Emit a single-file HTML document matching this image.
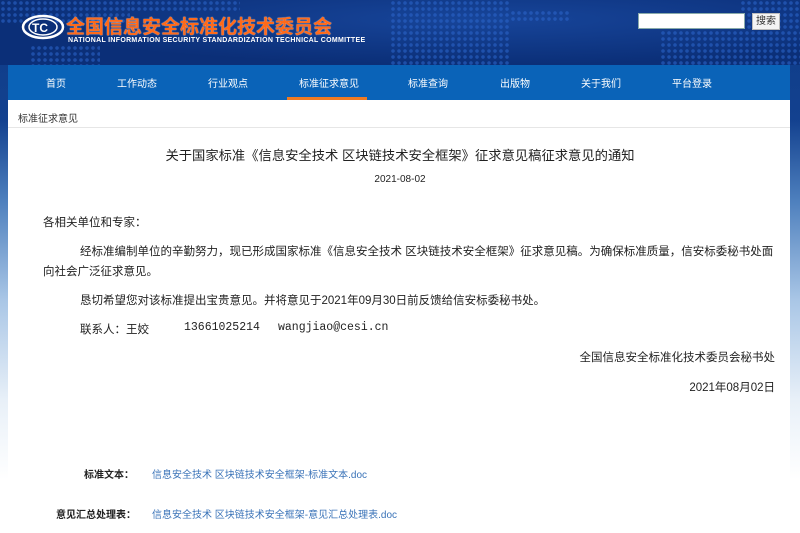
<!DOCTYPE html>
<html><head><meta charset="utf-8"><style>
*{margin:0;padding:0;box-sizing:border-box}
body{width:800px;height:533px;overflow:hidden;font-family:"Liberation Sans","Noto Sans CJK SC",sans-serif;background:linear-gradient(180deg,#0d3b86 0,#13418f 120px,#4d7fbd 200px,#a9c6e6 300px,#e8f0f8 400px,#fff 480px);position:relative}
.hdr{position:absolute;left:0;top:0;width:800px;height:65px;background:radial-gradient(ellipse at 60% 30%,#17459a 0,#0b2f78 70%);overflow:hidden}
.dots{position:absolute;background-image:radial-gradient(circle,#2a63c8 1.6px,transparent 2px);background-size:6px 6px;opacity:.6}
.logo{position:absolute;left:20px;top:12px}
.cn{position:absolute;left:66px;top:12px;font-size:19px;font-weight:bold;color:#ff6a1a;text-shadow:0 0 1px #fff}
.en{position:absolute;left:68px;top:37px;font-size:7px;color:#fff;font-weight:bold;letter-spacing:.3px;white-space:nowrap}
.search{position:absolute;left:638px;top:13px;width:107px;height:16px;background:#fff;border:1px solid #8aa}
.sbtn{position:absolute;left:752px;top:13px;width:28px;height:17px;background:#f4f4f4;border:1px solid #bbb;font-size:10px;color:#333;text-align:center;line-height:15px}
.nav{position:absolute;left:8px;top:65px;width:782px;height:35px;background:#0a63b8}
.nav span{position:absolute;top:10px;font-size:10px;color:#fff}
.act{position:absolute;left:287px;top:97px;width:80px;height:3px;background:#f07a22}
.main{position:absolute;left:8px;top:100px;width:782px;height:433px;background:#fff}
.bc{height:28px;border-bottom:1px solid #e6e6e6;font-size:10px;color:#333;padding:10px 0 0 10px}
.t{position:absolute;font-size:12px;color:#222;white-space:nowrap}
.p{font-size:11.5px}
.a{color:#3a73b8;font-size:10px}
.l{font-size:10px;font-weight:bold;color:#222}
</style></head><body>
<div class="hdr">
<div class="dots" style="left:0;top:0;width:130px;height:25px"></div>
<div class="dots" style="left:30px;top:45px;width:70px;height:20px"></div>
<div class="dots" style="left:130px;top:0;width:110px;height:12px"></div>
<div class="dots" style="left:390px;top:0;width:120px;height:65px"></div>
<div class="dots" style="left:510px;top:10px;width:60px;height:12px"></div>
<div class="dots" style="left:660px;top:30px;width:140px;height:35px"></div>
<div class="dots" style="left:740px;top:0;width:60px;height:30px"></div>
<svg class="logo" width="46" height="30" viewBox="0 0 46 30"><ellipse cx="23" cy="15" rx="20" ry="11" fill="none" stroke="#fff" stroke-width="2.5"/><ellipse cx="23" cy="15" rx="14" ry="8" fill="#0b2f78" stroke="#fff" stroke-width="1.5"/><text x="12" y="20" font-size="12" font-weight="bold" fill="#fff" font-family="Liberation Sans">TC</text></svg>
<div class="cn">全国信息安全标准化技术委员会</div>
<div class="en">NATIONAL INFORMATION SECURITY STANDARDIZATION TECHNICAL COMMITTEE</div>
<div class="search"></div><div class="sbtn">搜索</div>
</div>
<div class="nav">
<span style="left:38px">首页</span><span style="left:109px">工作动态</span><span style="left:200px">行业观点</span><span style="left:291px">标准征求意见</span><span style="left:400px">标准查询</span><span style="left:492px">出版物</span><span style="left:573px">关于我们</span><span style="left:664px">平台登录</span>
</div>
<div class="act"></div>
<div class="main"><div class="bc">标准征求意见</div></div>
<div class="t" style="left:0;width:800px;text-align:center;top:145px;font-size:13.3px">关于国家标准《信息安全技术 区块链技术安全框架》征求意见稿征求意见的通知</div>
<div class="t" style="left:0;width:800px;text-align:center;top:174px;font-size:10px">2021-08-02</div>
<div class="t p" style="left:43px;top:214px">各相关单位和专家：</div>
<div class="t p" style="left:80px;top:243px">经标准编制单位的辛勤努力，现已形成国家标准《信息安全技术 区块链技术安全框架》征求意见稿。为确保标准质量，信安标委秘书处面</div>
<div class="t p" style="left:43px;top:263px">向社会广泛征求意见。</div>
<div class="t p" style="left:80px;top:292px">恳切希望您对该标准提出宝贵意见。并将意见于2021年09月30日前反馈给信安标委秘书处。</div>
<div class="t p" style="left:80px;top:321px">联系人：王姣</div>
<div class="t" style="left:184px;top:321px;font-family:'Liberation Mono',monospace;font-size:11.5px">13661025214</div>
<div class="t" style="left:278px;top:321px;font-family:'Liberation Mono',monospace;font-size:11.5px">wangjiao@cesi.cn</div>
<div class="t p" style="right:25px;top:349px">全国信息安全标准化技术委员会秘书处</div>
<div class="t p" style="right:25px;top:379px">2021年08月02日</div>
<div class="t l" style="left:84px;top:466px">标准文本：</div>
<div class="t a" style="left:152px;top:466px">信息安全技术 区块链技术安全框架-标准文本.doc</div>
<div class="t l" style="left:56px;top:506px">意见汇总处理表：</div>
<div class="t a" style="left:152px;top:506px">信息安全技术 区块链技术安全框架-意见汇总处理表.doc</div>
</body></html>
